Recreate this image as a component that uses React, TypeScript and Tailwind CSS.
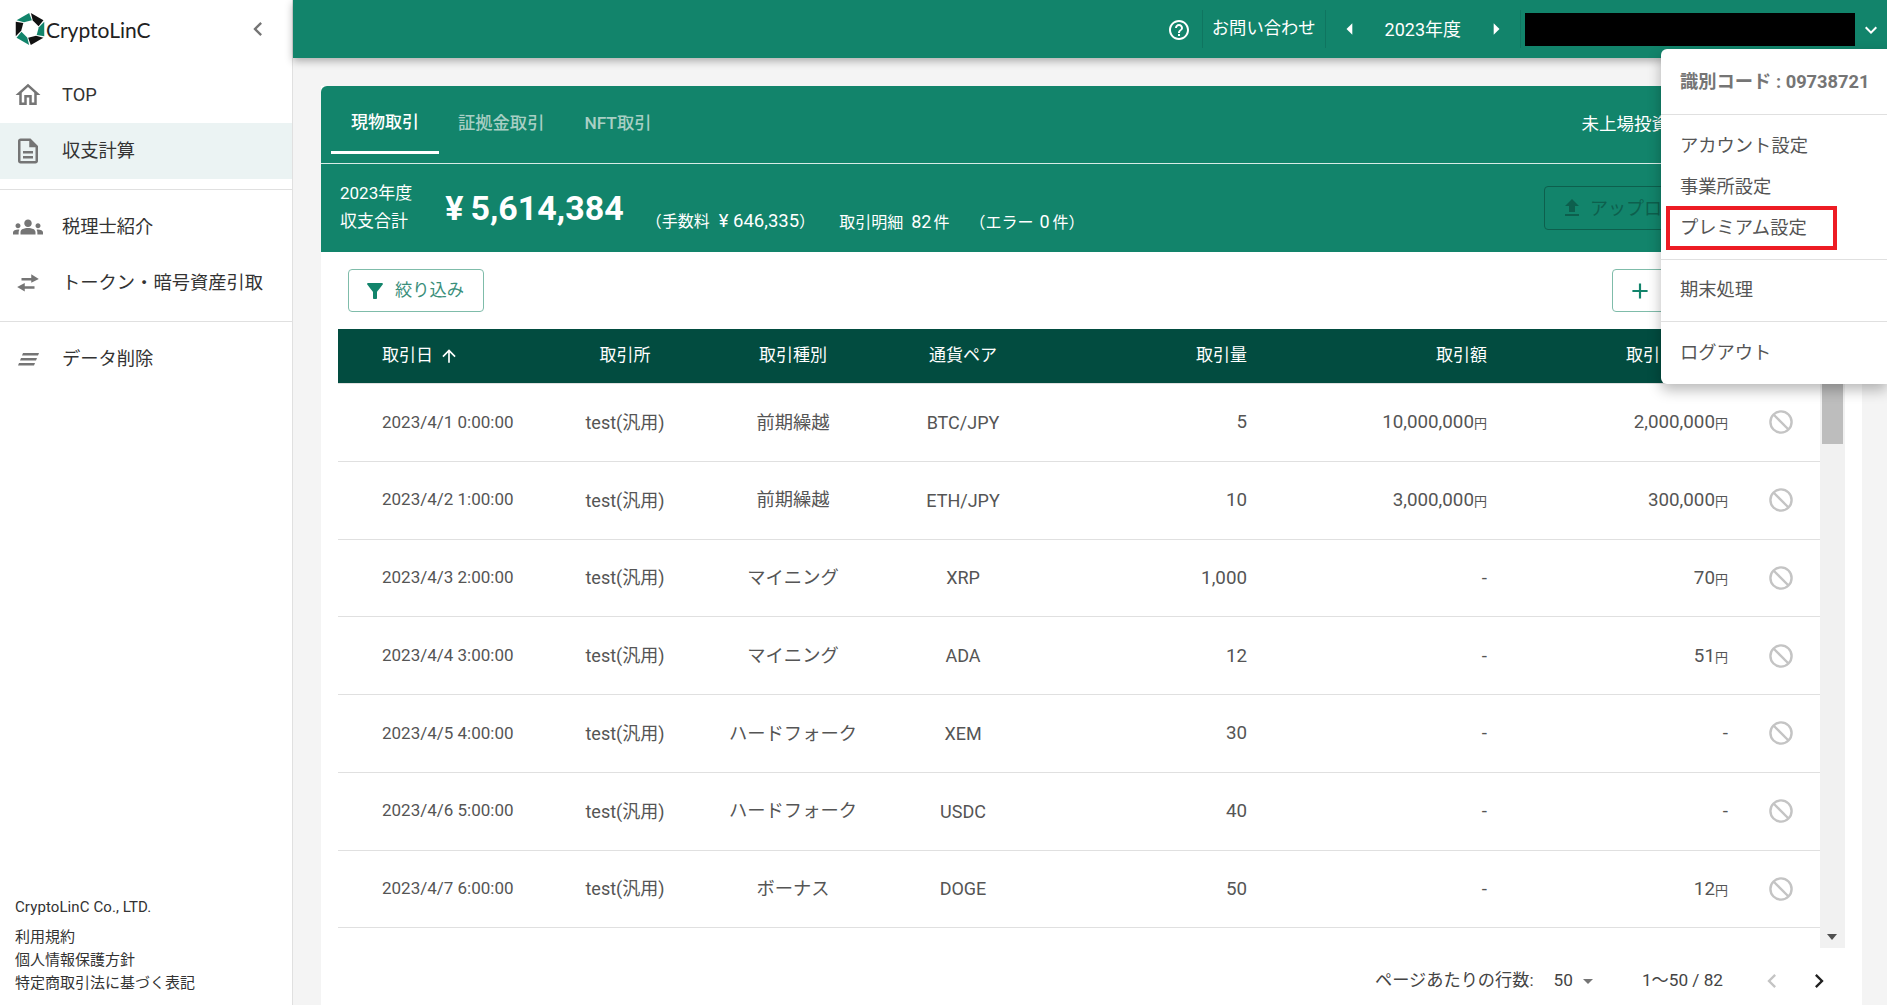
import {
  MdOutlineHome,
  MdOutlineDescription,
  MdGroups,
  MdHelpOutline,
  MdFilterAlt,
  MdFileUpload,
  MdAdd,
  MdArrowUpward,
  MdArrowDropDown,
  MdArrowLeft,
  MdArrowRight,
  MdChevronLeft,
  MdChevronRight,
  MdKeyboardArrowDown,
} from "react-icons/md";

const rows = [
  { date: "2023/4/1 0:00:00", type: "前期繰越", pair: "BTC/JPY", qty: "5", amount: "10,000,000", price: "2,000,000" },
  { date: "2023/4/2 1:00:00", type: "前期繰越", pair: "ETH/JPY", qty: "10", amount: "3,000,000", price: "300,000" },
  { date: "2023/4/3 2:00:00", type: "マイニング", pair: "XRP", qty: "1,000", amount: "", price: "70" },
  { date: "2023/4/4 3:00:00", type: "マイニング", pair: "ADA", qty: "12", amount: "", price: "51" },
  { date: "2023/4/5 4:00:00", type: "ハードフォーク", pair: "XEM", qty: "30", amount: "", price: "" },
  { date: "2023/4/6 5:00:00", type: "ハードフォーク", pair: "USDC", qty: "40", amount: "", price: "" },
  { date: "2023/4/7 6:00:00", type: "ボーナス", pair: "DOGE", qty: "50", amount: "", price: "12" },
];

const COLS = "grid grid-cols-[202px_170px_166px_174px_197px_240px_241px_91px] items-center";

function hexSegment(i: number) {
  const rad = (d: number) => (d * Math.PI) / 180;
  const a = -90 + i * 60;
  const pt = (r: number, d: number) => `${(15 + r * Math.cos(rad(d))).toFixed(2)},${(16 + r * Math.sin(rad(d))).toFixed(2)}`;
  return [pt(16, a + 3), pt(16, a + 57), pt(9, a + 72), pt(9, a + 18)].join(" ");
}

function Logo() {
  return (
    <div className="flex items-center gap-[1px]">
      <svg width="30" height="32" viewBox="0 0 30 32">
        {[0, 1, 2, 3, 4, 5].map((i) => (
          <polygon key={i} points={hexSegment(i)} fill={i % 2 === 0 ? "#111111" : "#12846b"} />
        ))}
      </svg>
      <span className="font-['Lato',sans-serif] text-[21px] leading-none text-[#222]">CryptoLinC</span>
    </div>
  );
}

function SlantLines() {
  return (
    <svg width="24" height="24" viewBox="0 0 24 24" fill="#757575">
      <polygon points="7,6 23,6 22,8.4 6,8.4" />
      <polygon points="5,11 21,11 20,13.4 4,13.4" />
      <polygon points="3,16 19,16 18,18.4 2,18.4" />
    </svg>
  );
}

function SwapArrows() {
  return (
    <svg width="26" height="26" viewBox="0 0 24 24" fill="#757575">
      <path d="M15 4l7 4.2-7 3.6V9.6H6V7.4h9z" />
      <path d="M9 12l-7 3.8 7 4v-2.6h9V15H9z" />
    </svg>
  );
}

function BanIcon() {
  return (
    <svg width="24" height="24" viewBox="0 0 24 24" fill="none" stroke="#c4c4c4" strokeWidth="2.4">
      <circle cx="12" cy="12" r="10.6" />
      <line x1="4.5" y1="4.5" x2="19.5" y2="19.5" />
    </svg>
  );
}

function NavRow({ icon, label, active }: { icon: React.ReactNode; label: string; active?: boolean }) {
  return (
    <div className={`flex h-[56px] items-center ${active ? "bg-[#ebf3f3]" : ""}`}>
      <div className="flex w-[62px] justify-center pr-[6px] text-[#757575]">{icon}</div>
      <span className="text-[18.3px] text-[#333]">{label}</span>
    </div>
  );
}

function Sidebar() {
  return (
    <aside className="z-10 flex h-full w-[293px] shrink-0 flex-col border-r border-[#e0e0e0] bg-white">
      <div className="flex h-[58px] items-center justify-between pl-[15px] pr-[20px]">
        <Logo />
        <MdChevronLeft className="text-[#757575]" size={28} />
      </div>
      <div className="mt-[8px] border-b border-[#e0e0e0] pb-[10px]">
        <div className="h-[1px]" />
        <NavRow icon={<MdOutlineHome size={30} />} label="TOP" />
        <NavRow icon={<MdOutlineDescription size={30} />} label="収支計算" active />
      </div>
      <div className="border-b border-[#e0e0e0] pb-[10px] pt-[9px]">
        <NavRow icon={<MdGroups size={30} />} label="税理士紹介" />
        <NavRow icon={<SwapArrows />} label="トークン・暗号資産引取" />
      </div>
      <div className="pt-[9px]">
        <NavRow icon={<SlantLines />} label="データ削除" />
      </div>
      <div className="mt-auto pb-[10px] pl-[15px] text-[#333]">
        <p className="mb-[8px] text-[15px] tracking-[0.1px]">CryptoLinC Co., LTD.</p>
        <p className="text-[15px] leading-[23px]">利用規約</p>
        <p className="text-[15px] leading-[23px]">個人情報保護方針</p>
        <p className="text-[15px] leading-[23px]">特定商取引法に基づく表記</p>
      </div>
    </aside>
  );
}

function TopBar() {
  return (
    <header className="z-10 flex h-[58px] shrink-0 items-center justify-end bg-[#12846b] text-white shadow-[0_3px_8px_rgba(0,0,0,0.3)]">
      <MdHelpOutline size={24} className="mr-[11px] mt-[2px]" />
      <div className="h-[38px] w-px bg-[#0f7560]" />
      <span className="mx-[9px] text-[17.3px]">お問い合わせ</span>
      <div className="h-[38px] w-px bg-[#0f7560]" />
      <MdArrowLeft size={28} className="ml-[10px]" />
      <span className="mx-[21px] text-[18px]">2023年度</span>
      <MdArrowRight size={28} />
      <div className="ml-[10px] h-[38px] w-px bg-[#0f7560]" />
      <div className="ml-[4px] h-[33px] w-[330px] bg-black" />
      <MdKeyboardArrowDown size={24} className="mx-[4px] mt-[2px]" />
    </header>
  );
}

function GreenPanel() {
  return (
    <div className="rounded-t-[6px] bg-[#12846b] text-white">
      <div className="flex h-[77px] items-stretch pl-[10px]">
        <div className="mb-[9px] flex w-[108px] items-center justify-center border-b-[3px] border-white pt-[8px] text-[17px] font-medium">現物取引</div>
        <div className="ml-[19px] flex items-center pb-[1px] text-[17.3px] font-medium text-[#a8cfc4]">証拠金取引</div>
        <div className="ml-[40px] flex items-center pb-[1px] text-[17.3px] font-medium text-[#a8cfc4]">NFT取引</div>
        <div className="ml-auto mr-[193px] flex items-center pb-[1px] text-[17.5px]">未上場投資</div>
      </div>
      <div className="h-px bg-[#d8ece6]" />
      <div className="flex h-[88px] items-center pl-[19px]">
        <div className="mt-[-3px] text-[17px] leading-[28px]">
          <p>2023年度</p>
          <p>収支合計</p>
        </div>
        <span className="ml-[33px] mt-[1px] text-[34px] font-bold">
          ¥<span className="ml-[7px]">5,614,384</span>
        </span>
        <span className="ml-[22px] mt-[27px] text-[16px]">
          （手数料<span className="ml-[9px] text-[18.5px]">¥ 646,335</span>）
        </span>
        <span className="ml-[24px] mt-[27px] text-[16px]">
          取引明細<span className="ml-[8px] mr-[2px] text-[18px]">82</span>件
        </span>
        <span className="ml-[20px] mt-[27px] text-[16px]">
          （エラー<span className="ml-[6px] mr-[3px] text-[18px]">0</span>件）
        </span>
        <div className="ml-auto mr-[68px] flex h-[44px] w-[250px] items-center rounded-[4px] border border-[#0d5f4d] pl-[15px] text-[#0d5f4d]">
          <MdFileUpload size={24} />
          <span className="ml-[6px] text-[18px]">アップロード</span>
        </div>
      </div>
    </div>
  );
}

function Toolbar() {
  return (
    <div className="flex h-[77px] items-center justify-between px-[27px]">
      <button className="flex h-[43px] w-[136px] items-center rounded-[4px] border border-[#7fbcaa] pl-[14px] text-[#3b8f7b]">
        <MdFilterAlt size={24} className="text-[#12846b]" />
        <span className="ml-[8px] text-[17.3px]">絞り込み</span>
      </button>
      <button className="flex h-[43px] w-[223px] items-center rounded-[4px] border border-[#7fbcaa] pl-[14px] text-[#12846b]">
        <MdAdd size={26} />
      </button>
    </div>
  );
}

function Yen({ value }: { value: string }) {
  if (!value) return <span>-</span>;
  return (
    <span>
      {value}
      <span className="text-[13px]">円</span>
    </span>
  );
}

function Table() {
  return (
    <div className="mx-[17px]">
      <div className={`${COLS} h-[55px] border-b border-[#e0e0e0] bg-[#024c40] text-[17px] text-white`}>
        <div className="flex items-center pl-[44px]">
          取引日
          <MdArrowUpward size={20} className="ml-[6px]" />
        </div>
        <div className="text-center">取引所</div>
        <div className="text-center">取引種別</div>
        <div className="text-center">通貨ペア</div>
        <div className="text-right">取引量</div>
        <div className="text-right">取引額</div>
        <div className="pl-[139px]">取引</div>
        <div />
      </div>
      <div className="flex h-[564px]">
        <div className="flex-1">
          {rows.map((r) => (
            <div key={r.date} className={`${COLS} h-[77.75px] border-b border-[#e0e0e0] text-[#555]`}>
              <div className="pl-[44px] text-[17px]">{r.date}</div>
              <div className="text-center text-[18px]">test(汎用)</div>
              <div className="text-center text-[18.3px]">{r.type}</div>
              <div className="text-center text-[18px]">{r.pair}</div>
              <div className="text-right text-[18.8px]">{r.qty}</div>
              <div className="text-right text-[18.8px]"><Yen value={r.amount} /></div>
              <div className="text-right text-[18.8px]"><Yen value={r.price} /></div>
              <div className="pl-[41px]"><BanIcon /></div>
            </div>
          ))}
        </div>
        <div className="relative w-[25px] bg-[#f1f1f1]">
          <div className="mx-auto h-[60px] w-[21px] bg-[#bdbdbd]" />
          <div className="absolute bottom-[8px] left-[7px] h-0 w-0 border-x-[5px] border-t-[6px] border-x-transparent border-t-[#505050]" />
        </div>
      </div>
    </div>
  );
}

function Pager() {
  return (
    <div className="flex h-[57px] items-center justify-end pr-[29px] pt-[8px] text-[17.2px] text-[#444]">
      <span>ページあたりの行数:</span>
      <span className="ml-[20px]">50</span>
      <MdArrowDropDown size={24} className="ml-[3px] text-[#757575]" />
      <span className="ml-[42px]">1〜50 / 82</span>
      <MdChevronLeft size={28} className="ml-[35px] text-[#c4c4c4]" />
      <MdChevronRight size={28} className="ml-[19px] text-[#222]" />
    </div>
  );
}

function MenuItem({ children }: { children: React.ReactNode }) {
  return <div className="flex h-[41px] items-center pl-[19px] text-[18.3px] text-[#555]">{children}</div>;
}

function AccountMenu() {
  return (
    <div className="absolute left-[1661px] right-0 top-[49px] z-20 rounded-l-[6px] bg-white shadow-[0_6px_14px_rgba(0,0,0,0.28)]">
      <div className="flex h-[66px] items-start border-b border-[#e0e0e0] pl-[19px] pt-[19px] text-[18.3px] font-bold text-[#757575]">
        識別コード : 09738721
      </div>
      <div className="border-b border-[#e0e0e0] pb-[11px] pt-[10px]">
        <MenuItem>アカウント設定</MenuItem>
        <MenuItem>事業所設定</MenuItem>
        <div className="relative">
          <MenuItem>プレミアム設定</MenuItem>
          <div className="absolute left-[5px] top-[-1px] h-[44px] w-[171px] border-[4px] border-[#ed1c24]" />
        </div>
      </div>
      <div className="border-b border-[#e0e0e0] pb-[11px] pt-[9px]">
        <MenuItem>期末処理</MenuItem>
      </div>
      <div className="pb-[11px] pt-[10px]">
        <MenuItem>ログアウト</MenuItem>
      </div>
    </div>
  );
}

export default function App() {
  return (
    <div className="relative flex h-screen overflow-hidden bg-[#f4f4f4] font-[Roboto,'Noto_Sans_CJK_JP',sans-serif]">
      <Sidebar />
      <div className="flex min-w-0 flex-1 flex-col">
        <TopBar />
        <main className="flex-1 overflow-hidden pl-[28px] pr-[25px] pt-[28px]">
          <div className="h-full bg-white">
            <GreenPanel />
            <Toolbar />
            <Table />
            <Pager />
          </div>
        </main>
      </div>
      <AccountMenu />
    </div>
  );
}
